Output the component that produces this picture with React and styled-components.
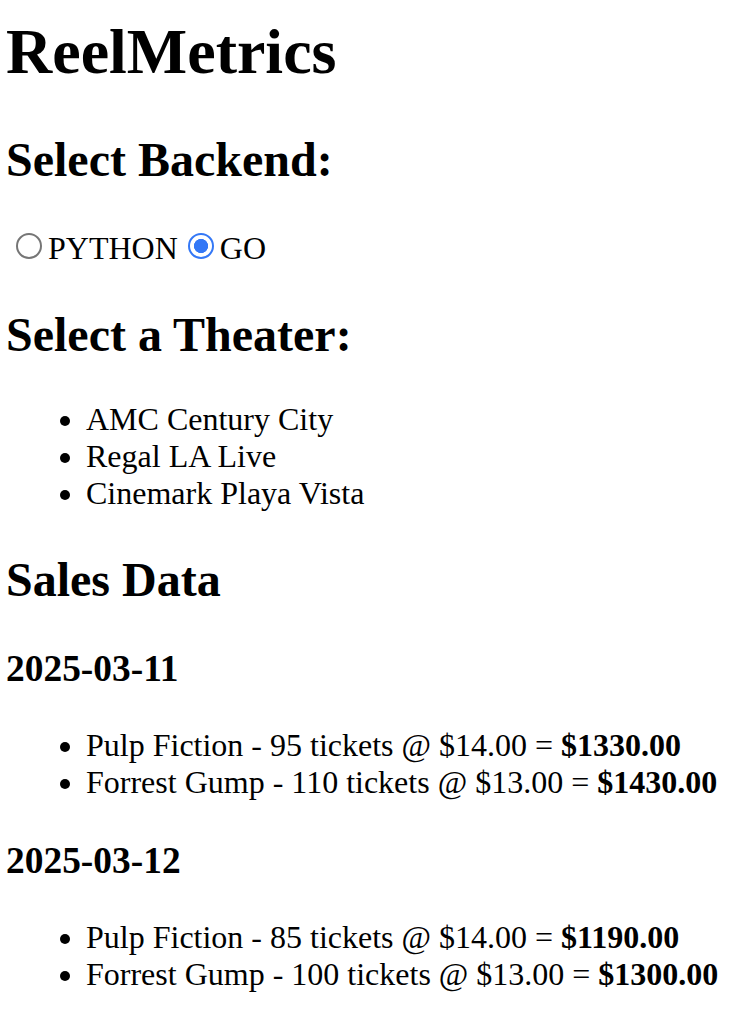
import React, { useState } from 'react';
import styled, { createGlobalStyle } from 'styled-components';

const GlobalStyle = createGlobalStyle`
  body {
    margin: 0;
    background: #fff;
    color: #000;
    font-family: "Liberation Serif", "Times New Roman", serif;
    font-size: 32px;
  }
`;

const Page = styled.div`
  padding: 15px 6px;
`;

const Title = styled.h1`
  font-size: 64px;
  font-weight: bold;
  margin: 0 0 42.88px;
`;

const Heading = styled.h2`
  font-size: 48px;
  font-weight: bold;
  margin: 39.84px 0;
`;

const SubHeading = styled.h3`
  font-size: 37.44px;
  font-weight: bold;
  margin: 37.44px 0;
`;

const RadioGroup = styled.div`
  display: block;
`;

const Radio = styled.input`
  appearance: none;
  display: inline-block;
  box-sizing: border-box;
  width: 26px;
  height: 26px;
  margin: 6px 6px 0 10px;
  border: 2px solid #767676;
  border-radius: 50%;
  background: #fff;
  vertical-align: baseline;

  &:checked {
    border: 2.5px solid #3478f6;
    background: radial-gradient(circle, #3478f6 0 6.8px, #fff 7.4px);
  }
`;

const List = styled.ul`
  margin: 32px 0;
  padding-left: 80px;
  list-style: disc;
`;

const Item = styled.li`
  line-height: normal;
`;

const theaters = ['AMC Century City', 'Regal LA Live', 'Cinemark Playa Vista'];

const sales = [
  {
    date: '2025-03-11',
    rows: [
      { movie: 'Pulp Fiction', tickets: 95, price: 14 },
      { movie: 'Forrest Gump', tickets: 110, price: 13 },
    ],
  },
  {
    date: '2025-03-12',
    rows: [
      { movie: 'Pulp Fiction', tickets: 85, price: 14 },
      { movie: 'Forrest Gump', tickets: 100, price: 13 },
    ],
  },
];

const App = () => {
  const [backend, setBackend] = useState('GO');

  return (
    <Page>
      <GlobalStyle />
      <Title>ReelMetrics</Title>

      <Heading>Select Backend:</Heading>
      <RadioGroup>
        {['PYTHON', 'GO'].map((name) => (
          <label key={name}>
            <Radio
              type="radio"
              name="backend"
              value={name}
              checked={backend === name}
              onChange={() => setBackend(name)}
            />
            {name}
          </label>
        ))}
      </RadioGroup>

      <Heading>Select a Theater:</Heading>
      <List>
        {theaters.map((t) => (
          <Item key={t}>{t}</Item>
        ))}
      </List>

      <Heading>Sales Data</Heading>
      {sales.map((day) => (
        <section key={day.date}>
          <SubHeading>{day.date}</SubHeading>
          <List>
            {day.rows.map((r) => (
              <Item key={r.movie}>
                {r.movie} - {r.tickets} tickets @ ${r.price.toFixed(2)} ={' '}
                <strong>${(r.tickets * r.price).toFixed(2)}</strong>
              </Item>
            ))}
          </List>
        </section>
      ))}
    </Page>
  );
};

export default App;
